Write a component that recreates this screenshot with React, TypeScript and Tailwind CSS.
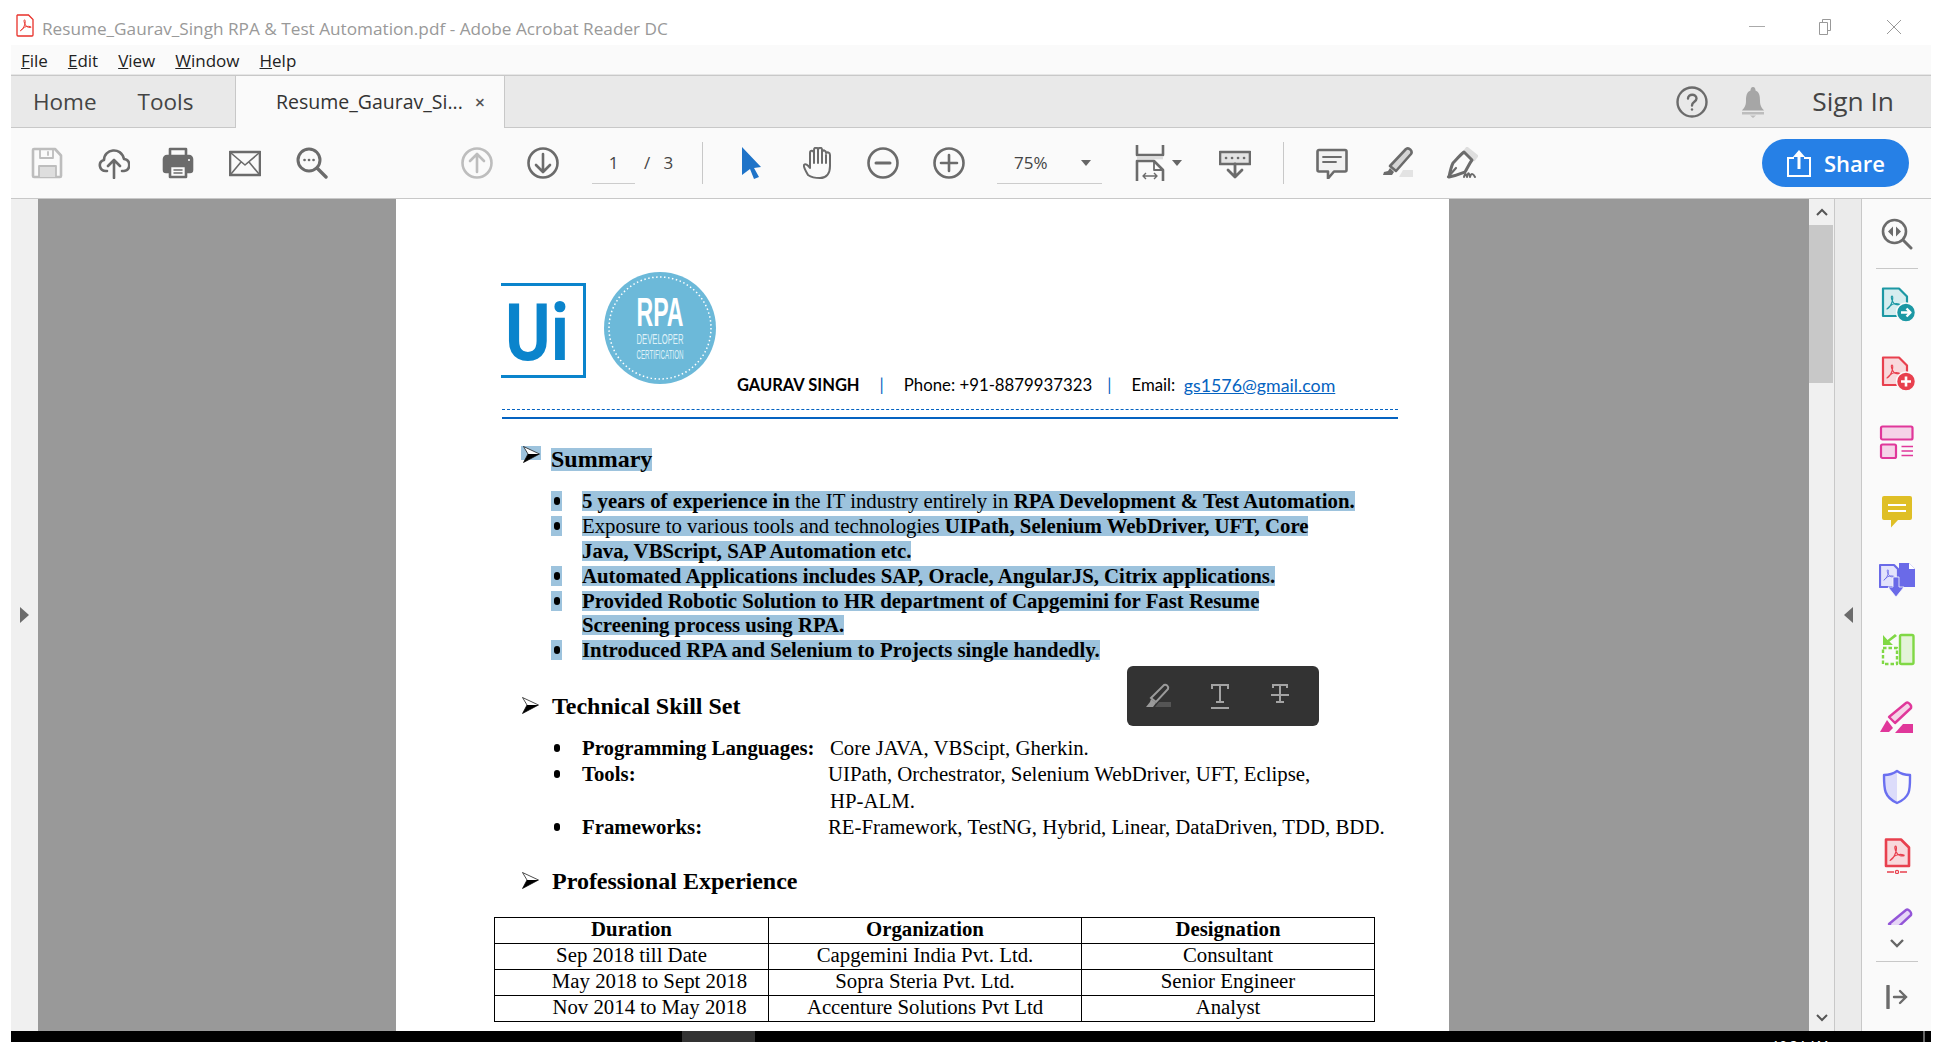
import type { ReactNode } from 'react';

const GRAY = '#6b6b6b';

const PdfMark = ({ color, x = 0, y = 0, s = 1 }: { color: string; x?: number; y?: number; s?: number }) => (
  <path
    transform={`translate(${x} ${y}) scale(${s})`}
    d="M1 14c2-1 4-4 5-7 1-3 1-6 0-6S5 4 7 7c1 2 3 3 6 3 1 0 1-1 0-1-3-1-7 0-9 2-1 1-3 3-3 3z"
    fill="none"
    stroke={color}
    strokeWidth="1.1"
  />
);

const Tb = ({ children, className }: { children: ReactNode; className: string }) => (
  <svg viewBox="0 0 32 32" className={`w-8 h-8 shrink-0 ${className}`} fill="none" stroke={GRAY} strokeWidth="2.6" strokeLinecap="round" strokeLinejoin="round">
    {children}
  </svg>
);

const Rail = ({ children }: { children: ReactNode }) => (
  <svg viewBox="0 0 36 36" className="w-9 h-9 shrink-0" fill="none" strokeWidth="2.2" strokeLinejoin="round">
    {children}
  </svg>
);

const RailCell = ({ children }: { children: ReactNode }) => (
  <div className="h-[69px] shrink-0 flex items-center justify-center">{children}</div>
);

const Arrow = () => (
  <svg viewBox="0 0 17 17" className="w-[17px] h-[17px] shrink-0">
    <path d="M0.5 0.5 16.5 8 0.5 16.5 5 8z" fill="#fff" stroke="#000" strokeWidth="0.7" />
    <path d="M0.5 16.5 16.5 8 5 8z" fill="#000" />
  </svg>
);

const Hl = ({ children, className = '' }: { children: ReactNode; className?: string }) => (
  <span className={`inline-block h-5 leading-5 bg-[#9dc3dd] ${className}`}>{children}</span>
);

const SummaryRow = ({ bullet = true, children }: { bullet?: boolean; children: ReactNode }) => (
  <div className="h-[24.8px] flex items-center pl-[49px] whitespace-nowrap">
    {bullet ? (
      <span className="w-[11px] h-5 bg-[#9dc3dd] flex items-center justify-center">
        <span className="w-[6px] h-2 rounded-full bg-black" />
      </span>
    ) : (
      <span className="w-[11px]" />
    )}
    <span className="w-5" />
    <Hl>{children}</Hl>
  </div>
);

const SkillRow = ({ label, value, indent = 'pl-0' }: { label?: string; value: string; indent?: string }) => (
  <div className="h-[26.3px] flex items-center pl-[49px] whitespace-nowrap">
    <span className="w-[11px] flex items-center justify-center">
      {label && <span className="w-[6px] h-2 rounded-full bg-black" />}
    </span>
    <span className="w-5" />
    <span className="w-[246px] font-bold">{label}</span>
    <span className={indent}>{value}</span>
  </div>
);

const rows = [
  ['Sep 2018 till Date', 'Capgemini India Pvt. Ltd.', 'Consultant'],
  ['May 2018 to Sept 2018', 'Sopra Steria Pvt. Ltd.', 'Senior Engineer'],
  ['Nov 2014 to May 2018', 'Accenture Solutions Pvt Ltd', 'Analyst'],
];

const App = () => {
  return (
    <div className="w-[1942px] h-[1042px] overflow-hidden bg-white flex flex-col px-[11px] font-['Open_Sans',sans-serif]">
      {/* Title bar */}
      <div className="h-[45px] shrink-0 flex items-center bg-white relative">
        <svg viewBox="0 0 18 23" className="w-[18px] h-[23px] ml-[5px] mt-[5px]">
          <path d="M1.5 1h11l4.5 4.5V21a1 1 0 0 1-1 1H2a1 1 0 0 1-1-1V1.5z" fill="#fff" stroke="#e8312a" strokeWidth="1.3" />
          <PdfMark color="#e8312a" x={3.5} y={5} s={0.85} />
        </svg>
        <span className="ml-[8px] mt-[12px] text-[17.2px] text-[#999] whitespace-nowrap">Resume_Gaurav_Singh RPA &amp; Test Automation.pdf - Adobe Acrobat Reader DC</span>
        <div className="ml-auto flex items-center mt-[8px]">
          <span className="w-4 h-px bg-[#aaa]" />
          <svg viewBox="0 0 16 16" className="w-4 h-4 ml-[52px]" fill="#fff" stroke="#999" strokeWidth="1">
            <path d="M5.5 3V.5h8v11H11" />
            <path d="M2.5 3.5h8v12h-8z" />
          </svg>
          <svg viewBox="0 0 16 16" className="w-4 h-4 ml-[53px] mr-[29px]" fill="none" stroke="#999" strokeWidth="1">
            <path d="M1 1l14 14M15 1 1 15" />
          </svg>
        </div>
      </div>

      {/* Menu bar */}
      <div className="h-[30px] shrink-0 bg-[#fafafa] border-b border-[#e6e6e6] flex items-center gap-5 pl-[10px] pt-[2px] text-[17px] text-[#222]">
        <span><u>F</u>ile</span>
        <span><u>E</u>dit</span>
        <span><u>V</u>iew</span>
        <span><u>W</u>indow</span>
        <span><u>H</u>elp</span>
      </div>

      {/* Tabs */}
      <div className="h-[53px] shrink-0 bg-[#e9e9e9] border-y border-[#c8c8c8] flex items-stretch text-[#444]">
        <div className="w-[224px] shrink-0 flex items-center pl-[22px] text-[22.5px]">
          <span>Home</span>
          <span className="ml-[41px]">Tools</span>
        </div>
        <div className="w-[270px] shrink-0 -mb-px bg-[#fafafa] border-x border-[#c8c8c8] flex items-center pl-[40px] text-[19.5px] text-[#333]">
          <span>Resume_Gaurav_Si...</span>
          <span className="ml-[12px] text-[18px] font-semibold text-[#555]">×</span>
        </div>
        <div className="ml-auto flex items-center">
          <svg viewBox="0 0 32 32" className="w-8 h-8" fill="none" stroke={GRAY} strokeWidth="2.4">
            <circle cx="16" cy="16" r="14.5" />
            <path d="M12 12.5c0-5 8.5-5 8.5 0 0 3.5-4.5 3-4.5 7" strokeLinecap="round" />
            <circle cx="16" cy="23.5" r="1.2" fill={GRAY} stroke="none" />
          </svg>
          <svg viewBox="0 0 28 32" className="w-7 h-8 ml-[31px]" fill="#a6a6a6">
            <path d="M14 1c2 0 2.5 2 2.5 3.5C20.5 6 21 10 21 15c0 5 2 7 4 9.500H3c2-2.500 4-4.500 4-9.500 0-5 .5-9 4.500-10.500C11.500 3 12 1 14 1z" />
            <path d="M3 26h22v2.500H3zM11 29.500h6l-3 2.500z" fill="#bdbdbd" />
          </svg>
          <span className="ml-[45px] mr-[37px] text-[26.3px] text-[#444]">Sign In</span>
        </div>
      </div>

      {/* Toolbar */}
      <div className="h-[71px] shrink-0 bg-[#fafafa] border-b border-[#c8c8c8] flex items-center">
        <Tb className="ml-5">
          <g stroke="#bdbdbd">
            <path d="M3 2h21l6 6.500V29a1 1 0 0 1-1 1H3a1 1 0 0 1-1-1V3a1 1 0 0 1 1-1z" />
            <path d="M9 2v9h13V2M17 5v3" strokeWidth="1.8" />
            <path d="M8 30V19h17v11" fill="#dedede" strokeWidth="1.8" />
          </g>
        </Tb>
        <Tb className="ml-[35px]">
          <path d="M9 24H8c-7 0-8.500-9-2-11 0-11 17-14 20-1 7 1 7 11 0 12h-2" />
          <path d="M16 31V14M10 19l6-6 6 6" />
        </Tb>
        <Tb className="ml-8">
          <path d="M8 9V2h16v7" />
          <path d="M7 25H4a2 2 0 0 1-2-2V12a3 3 0 0 1 3-3h22a3 3 0 0 1 3 3v11a2 2 0 0 1-2 2h-3" fill={GRAY} />
          <path d="M8 19h16v11H8z" fill="#fafafa" />
          <path d="M12 23h8M12 26h8" strokeWidth="1.5" />
          <circle cx="27" cy="13" r="1" fill="#fff" stroke="none" />
        </Tb>
        <Tb className="ml-[35px]">
          <path d="M1 5h30v23H1z" />
          <path d="M2 6l14 12L30 6M2 27l10-12M30 27 20 15" strokeWidth="1.6" />
        </Tb>
        <Tb className="ml-[35px]">
          <circle cx="13" cy="13" r="11" strokeWidth="3" />
          <path d="M21 21l9 9" strokeWidth="3.4" />
          <path d="M8.500 13h.1M13 13h.1M17.500 13h.1" />
        </Tb>

        <Tb className="ml-[133px]">
          <g stroke="#bdbdbd">
            <circle cx="16" cy="16" r="14.500" />
            <path d="M16 25V8M9 14l7-7 7 7" />
          </g>
        </Tb>
        <Tb className="ml-[34px]">
          <circle cx="16" cy="16" r="14.500" />
          <path d="M16 7v17M9 18l7 7 7-7" />
        </Tb>
        <div className="ml-[33px] w-[43px] h-[42px] border-b border-[#ccc] flex items-center justify-center text-[17px] text-[#444]">1</div>
        <div className="ml-[9px] w-[30px] text-[17px] text-[#444] whitespace-nowrap">/&nbsp;&nbsp;&nbsp;3</div>
        <div className="ml-[28px] w-px h-[42px] bg-[#c8c8c8]" />
        <svg viewBox="0 0 32 32" className="w-8 h-8 ml-[32px] shrink-0">
          <path d="M7 0 26 20l-7 1 5 9-5 2-4-10-8 6z" fill="#1e73c8" />
        </svg>
        <Tb className="ml-[36px]">
          <path d="M5 28C3 24 0 20 1 18c1-2 4 0 6 3V6c0-3 3.500-3 4 0V3c0-3 4-3 4 0v0c.5-3 4-3 4 0v2c1-2.500 4-2 4 1 1-1 4-1 4 2v11c0 8-4 12-10 12-6 0-9-1-12-3z" strokeWidth="2" />
          <path d="M11 6v10M15 3v13M19 5v11M23 8v8" strokeWidth="2" />
        </Tb>
        <Tb className="ml-8">
          <circle cx="16" cy="16" r="14.500" />
          <path d="M9 16h14" strokeWidth="3" />
        </Tb>
        <Tb className="ml-[34px]">
          <circle cx="16" cy="16" r="14.500" />
          <path d="M8 16h16M16 8v16" />
        </Tb>
        <div className="ml-8 w-[105px] h-[42px] shrink-0 border-b border-[#ccc] flex items-center pl-[17px] text-[17px] text-[#444]">
          <span>75%</span>
          <span className="ml-[33px] w-0 h-0 border-x-[5px] border-x-transparent border-t-[6px] border-t-[#666]" />
        </div>
        <svg viewBox="0 0 32 36" className="w-8 h-9 ml-8 shrink-0" fill="none" stroke={GRAY} strokeWidth="2.6" strokeLinejoin="round">
          <path d="M3 0v10h26V0" />
          <path d="M3 13h26" stroke="#ddd" />
          <path d="M3 36V16h17l9 9v11" />
          <path d="M20 16v9h9" strokeWidth="1.8" />
          <path d="M9 31h14M12 28l-3 3 3 3M20 28l3 3-3 3" strokeWidth="1.4" />
        </svg>
        <span className="ml-[6px] w-0 h-0 border-x-[5px] border-x-transparent border-t-[6px] border-t-[#666]" />
        <Tb className="ml-[37px]">
          <path d="M1 5h30v12H1z" fill="#e3e3e3" />
          <path d="M7 11h.1M13 11h.1M19 11h.1M25 11h.1" />
          <path d="M16 17v13M9 23l7 7 7-7" strokeWidth="2.800" />
        </Tb>
        <div className="ml-8 w-px h-[42px] bg-[#c8c8c8]" />
        <Tb className="ml-8">
          <path d="M3 3h26a1.500 1.500 0 0 1 1.500 1.500V23a1.500 1.500 0 0 1-1.500 1.500H18l-6 7v-7H3A1.500 1.500 0 0 1 1.500 23V4.500A1.500 1.500 0 0 1 3 3z" fill="#f1f1f1" />
          <path d="M7 10h18M7 15h13" strokeWidth="1.800" />
        </Tb>
        <Tb className="ml-[33px]">
          <path d="M18 30h15v-7H22z" fill="#e3e3e3" stroke="none" />
          <path d="M25 2c3-2 7 2 5 5L15 24l-6-5z" fill="#d5d5d5" />
          <path d="M9 21l-2 3-4 1-1 3h9l2-3z" fill={GRAY} stroke="none" />
        </Tb>
        <Tb className="ml-[33px]">
          <path d="M21 1l10 8-3 4-10-8z" fill="#dedede" stroke="#dedede" />
          <path d="M18 5l8 8c-3 4-5 9-7 12-3 1-6 3-16 5 1-5 2-10 4-14 3-3 7-8 11-11z" strokeWidth="3" />
          <path d="M2 30l8-9" strokeWidth="2.200" />
          <path d="M18 30c1-4 2-4 3 0 1-5 2-5 3 0 1-4 3-4 5 0" strokeWidth="2" />
        </Tb>
        <div className="ml-auto mr-[22px] w-[147px] h-12 rounded-full bg-[#2680e6] flex items-center pl-[24px] text-white text-[22px] font-semibold">
          <svg viewBox="0 0 26 28" className="w-[26px] h-[28px] mr-[12px]" fill="none" stroke="#fff" strokeWidth="2">
            <path d="M8 9H2v18h22V9h-6" />
            <path d="M13 20V3" strokeWidth="3" />
            <path d="M7 8l6-7 6 7z" fill="#fff" stroke="none" />
          </svg>
          <span>Share</span>
        </div>
      </div>

      {/* Document area */}
      <div className="flex-1 min-h-0 flex items-stretch">
        <div className="w-[27px] shrink-0 bg-[#f0f0f0] flex items-center justify-center">
          <span className="w-0 h-0 border-y-[8px] border-y-transparent border-l-[9px] border-l-[#6b6b6b]" />
        </div>
        <div className="flex-1 min-w-0 bg-[#999999] flex justify-center overflow-hidden relative">
          <div className="w-[1053px] -translate-x-px h-full bg-white pt-[73px] overflow-hidden font-['Liberation_Serif',serif] text-[20.8px] text-black relative">
            {/* Resume header */}
            <div className="h-[125px] pl-[105px] flex items-start">
              <svg viewBox="0 0 85 95" className="w-[85px] h-[95px] mt-[11px] shrink-0 overflow-visible">
                <path d="M0 1.500h83.500v92H0" fill="none" stroke="#0a84cc" strokeWidth="3" />
                <text x="4" y="77" fontFamily="Roboto, sans-serif" fontWeight="700" fontSize="80" fill="#0a84cc" textLength="64" lengthAdjust="spacingAndGlyphs">Ui</text>
              </svg>
              <svg viewBox="0 0 112 112" className="w-28 h-28 ml-[18px] shrink-0 overflow-visible">
                <circle cx="56" cy="56" r="56" fill="#6cb9d9" />
                <circle cx="56" cy="56" r="51" fill="none" stroke="#fff" strokeWidth="1.500" strokeDasharray="1.500 2.500" />
                <text x="56" y="54" textAnchor="middle" fontFamily="Liberation Sans, sans-serif" fontWeight="700" fontSize="40" fill="#fff" textLength="47" lengthAdjust="spacingAndGlyphs">RPA</text>
                <text x="56" y="72" textAnchor="middle" fontFamily="Liberation Sans, sans-serif" fontSize="14" fill="#dff1f8" textLength="47" lengthAdjust="spacingAndGlyphs">DEVELOPER</text>
                <text x="56" y="87" textAnchor="middle" fontFamily="Liberation Sans, sans-serif" fontSize="12" fill="#dff1f8" textLength="47" lengthAdjust="spacingAndGlyphs">CERTIFICATION</text>
              </svg>
              <div className="ml-[21px] mt-[102px] flex items-center h-[22px] whitespace-nowrap font-['Lato',sans-serif] text-[16.8px] text-black">
                <b className="text-[16.5px]">GAURAV SINGH</b>
                <span className="ml-[20px] text-[#0563c1]">|</span>
                <span className="ml-[20px]">Phone: +91-8879937323</span>
                <span className="ml-[15px] text-[#0563c1]">|</span>
                <span className="ml-[20px]">Email:&nbsp;&nbsp;</span>
                <span className="text-[17.8px] text-[#0563c1] underline">gs1576@gmail.com</span>
              </div>
            </div>
            <div className="ml-[106px] w-[896px] mt-3 border-t border-dashed border-[#0563c1]" />
            <div className="ml-[106px] w-[896px] mt-[7px] h-[2px] bg-[#0563c1]" />

            {/* Summary */}
            <div className="mt-[27px] h-[26px] pl-[125px] flex items-start text-[24px] font-bold">
              <span className="w-5 h-[14px] bg-[#9dc3dd] flex items-start justify-center"><Arrow /></span>
              <span className="ml-[10px] h-[23px] mt-[2px] leading-[23px] bg-[#9dc3dd]">Summary</span>
            </div>
            <div className="mt-[17px] pl-[106px]">
              <SummaryRow><b>5 years of experience in</b> the IT industry entirely in <b>RPA Development &amp; Test Automation.</b></SummaryRow>
              <SummaryRow>Exposure to various tools and technologies <b>UIPath, Selenium WebDriver, UFT, Core</b></SummaryRow>
              <SummaryRow bullet={false}><b>Java, VBScript, SAP Automation etc.</b></SummaryRow>
              <SummaryRow><b>Automated Applications includes SAP, Oracle, AngularJS, Citrix applications.</b></SummaryRow>
              <SummaryRow><b>Provided Robotic Solution to HR department of Capgemini for Fast Resume</b></SummaryRow>
              <SummaryRow bullet={false}><b>Screening process using RPA.</b></SummaryRow>
              <SummaryRow><b>Introduced RPA and Selenium to Projects single handedly.</b></SummaryRow>
            </div>

            {/* Skills */}
            <div className="mt-[30px] h-[26px] pl-[126px] flex items-center text-[24px] font-bold">
              <Arrow />
              <span className="ml-[13px]">Technical Skill Set</span>
            </div>
            <div className="mt-4 pl-[106px]">
              <SkillRow label="Programming Languages:" value="Core JAVA, VBScipt, Gherkin." indent="pl-[2px]" />
              <SkillRow label="Tools:" value="UIPath, Orchestrator, Selenium WebDriver, UFT, Eclipse," />
              <SkillRow value="HP-ALM." indent="pl-[2px]" />
              <SkillRow label="Frameworks:" value="RE-Framework, TestNG, Hybrid, Linear, DataDriven, TDD, BDD." />
            </div>

            {/* Experience */}
            <div className="mt-7 h-[26px] pl-[126px] flex items-center text-[24px] font-bold">
              <Arrow />
              <span className="ml-[13px]">Professional Experience</span>
            </div>
            <table className="mt-[23px] ml-[98px] w-[880px] table-fixed border-collapse text-[20.8px] leading-none">
              <colgroup>
                <col className="w-[274px]" />
                <col className="w-[313px]" />
                <col className="w-[293px]" />
              </colgroup>
              <tbody>
                <tr className="h-[26px] font-bold">
                  <td className="border border-black text-center p-0 pb-[2px]">Duration</td>
                  <td className="border border-black text-center p-0 pb-[2px]">Organization</td>
                  <td className="border border-black text-center p-0 pb-[2px]">Designation</td>
                </tr>
                {rows.map((row) => (
                  <tr key={row[0]} className="h-[26px]">
                    <td className={`border border-black text-center p-0 pb-[2px] ${row[0].startsWith('Sep') ? '' : 'pl-[36px]'}`}>{row[0]}</td>
                    <td className="border border-black text-center p-0 pb-[2px]">{row[1]}</td>
                    <td className="border border-black text-center p-0 pb-[2px]">{row[2]}</td>
                  </tr>
                ))}
              </tbody>
            </table>
          </div>

          {/* Text selection popup */}
          <div className="absolute left-[1089px] top-[467px] w-[192px] h-[60px] rounded-[6px] bg-[#333333] flex items-center pl-[18px]">
            <svg viewBox="0 0 26 26" className="w-[26px] h-[26px]" fill="none" stroke="#9a9a9a" strokeWidth="2">
              <path d="M10 24h16v-5H14z" fill="#555" stroke="none" />
              <path d="M19 2c2-1 5 1 4 4L11 19l-5-4z" />
              <path d="M6 16l-1 3-4 5h7l3-4z" fill="#9a9a9a" stroke="none" />
            </svg>
            <svg viewBox="0 0 22 26" className="w-[22px] h-[26px] ml-[39px]" fill="none" stroke="#a3a3a3" strokeWidth="2">
              <path d="M2 6V2h16v4M10 2v17M6 19h8M1 25h18" />
            </svg>
            <svg viewBox="0 0 22 22" className="w-[22px] h-[22px] ml-[38px] -mt-1" fill="none" stroke="#a3a3a3" strokeWidth="2">
              <path d="M3 5V2h14v3M10 2v17M6 19h8M1 12h18" />
            </svg>
          </div>
        </div>

        {/* Scrollbar */}
        <div className="w-[26px] shrink-0 bg-[#f0f0f0] border-r border-[#c8c8c8] flex flex-col items-center justify-between">
          <div className="w-full">
            <div className="h-[26px] flex items-center justify-center">
              <svg viewBox="0 0 12 8" className="w-3 h-2" fill="none" stroke="#555" strokeWidth="2"><path d="M1 7l5-5 5 5" /></svg>
            </div>
            <div className="w-[24px] h-[158px] bg-[#c8c8c8]" />
          </div>
          <div className="h-[26px] flex items-center justify-center">
            <svg viewBox="0 0 12 8" className="w-3 h-2" fill="none" stroke="#555" strokeWidth="2"><path d="M1 1l5 5 5-5" /></svg>
          </div>
        </div>
        <div className="w-[27px] shrink-0 bg-[#ebebeb] border-r border-[#c8c8c8] flex items-center justify-center">
          <span className="w-0 h-0 border-y-[8px] border-y-transparent border-r-[9px] border-r-[#6b6b6b]" />
        </div>

        {/* Right tools rail */}
        <div className="w-[69px] shrink-0 bg-[#fafafa] flex flex-col items-center">
          <div className="h-[69px] w-full shrink-0 flex items-center justify-center">
            <svg viewBox="0 0 32 32" className="w-8 h-8" fill="none" stroke={GRAY} strokeWidth="2.600">
              <circle cx="13.500" cy="13.500" r="11.500" />
              <path d="M22 22l8 8" strokeWidth="3" strokeLinecap="round" />
              <path d="M12 8.500v10l-5-5zM15 8.500v10l5-5z" fill={GRAY} stroke="none" />
            </svg>
          </div>
          <div className="w-[42px] h-px bg-[#c8c8c8] shrink-0" />
          <div className="h-[656px] w-full shrink-0 overflow-hidden">
            <RailCell>
              <Rail>
                <path d="M4 2.500h16l8 8V30H4z" fill="#d6edef" stroke="#1c98a4" />
                <PdfMark color="#1c98a4" x={7} y={9} s={1} />
                <circle cx="27" cy="26.500" r="9.500" fill="#1c98a4" stroke="#fafafa" strokeWidth="1.500" />
                <path d="M22 26.500h9M27.500 22.500l4 4-4 4" stroke="#fff" strokeWidth="2.400" />
              </Rail>
            </RailCell>
            <RailCell>
              <Rail>
                <path d="M4 2.500h16l8 8V30H4z" fill="#f8d9dc" stroke="#e8404e" />
                <PdfMark color="#e8404e" x={7} y={9} s={1} />
                <circle cx="27" cy="26.500" r="9.500" fill="#e8404e" stroke="#fafafa" strokeWidth="1.500" />
                <path d="M22 26.500h10M27 21.500v10" stroke="#fff" strokeWidth="2.600" />
              </Rail>
            </RailCell>
            <RailCell>
              <Rail>
                <rect x="2" y="2.500" width="31.500" height="13" rx="1.500" fill="#f5d3e8" stroke="#e0379a" />
                <rect x="2" y="20.500" width="15" height="13.500" rx="1.500" fill="#f5d3e8" stroke="#e0379a" />
                <path d="M22.500 22.500H34M22.500 27H34M22.500 31.500H34" stroke="#e0379a" strokeWidth="1.400" />
              </Rail>
            </RailCell>
            <RailCell>
              <Rail>
                <path d="M5 3h26a2 2 0 0 1 2 2v20a2 2 0 0 1-2 2H19l-7 7.500V27H5a2 2 0 0 1-2-2V5a2 2 0 0 1 2-2z" fill="#dfbf26" />
                <path d="M9 12h18M9 18h18" stroke="#fff" strokeWidth="2" />
              </Rail>
            </RailCell>
            <RailCell>
              <Rail>
                <path d="M20 1h10l6 6v18H20z" fill="#6a6ae8" />
                <path d="M30 1v6h6z" fill="#fff" />
                <path d="M1 3h14l4 4v18H1z" fill="#e3e3fb" stroke="#6a6ae8" />
                <PdfMark color="#6a6ae8" x={4} y={7} s={0.8} />
                <path d="M14 15h6v10h5l-8 10-8-10h5z" fill="#6a6ae8" stroke="#fafafa" strokeWidth="0.800" />
              </Rail>
            </RailCell>
            <RailCell>
              <Rail>
                <rect x="21" y="4" width="13.500" height="29" rx="1.500" fill="#e4f3d8" stroke="#80d845" strokeWidth="2.400" />
                <path d="M4 17h14v16H4z" stroke="#80d845" strokeWidth="2.400" strokeDasharray="3.500 2" />
                <path d="M4 4v10h10l-3.500-3.500L18 5l-2-2-7.500 6z" fill="#80d845" />
              </Rail>
            </RailCell>
            <RailCell>
              <Rail>
                <path d="M16 33h18v-9H24z" fill="#e0379a" />
                <path d="M27 3c2-1.500 6 2 5 5L16 23l-6-6z" fill="#f5d3e8" stroke="#e0379a" strokeWidth="2.400" />
                <path d="M8 20l-7 12h9l4-4z" fill="#e0379a" />
              </Rail>
            </RailCell>
            <RailCell>
              <Rail>
                <path d="M18 2C14 5 9 6 5 6c0 14 0 22 13 28z" fill="#dcdcfa" />
                <path d="M18 2c4 3 9 4 13 4 0 14 1 22-13 28C5 28 5 20 5 6c4 0 9-1 13-4z" stroke="#6a6ff0" strokeWidth="2.400" />
              </Rail>
            </RailCell>
            <RailCell>
              <Rail>
                <path d="M7 1.500h15l8 8V28H7z" fill="#f8d9dc" stroke="#e8404e" strokeWidth="2.600" />
                <PdfMark color="#e8404e" x={10} y={7} s={1.100} />
                <path d="M8 34h7M21 34h7" stroke="#e8404e" strokeWidth="1.400" />
                <circle cx="18" cy="34" r="1.600" stroke="#e8404e" strokeWidth="1.200" />
              </Rail>
            </RailCell>
            <RailCell>
              <Rail>
                <path d="M27 3c2-1.500 6 2 5 5L16 23l-6-6z" fill="#e6d6f6" stroke="#9355d8" strokeWidth="2.400" />
              </Rail>
            </RailCell>
          </div>
          <div className="h-9 shrink-0 flex items-center justify-center">
            <svg viewBox="0 0 14 9" className="w-[14px] h-[9px]" fill="none" stroke="#666" strokeWidth="2.400"><path d="M1 1l6 6 6-6" /></svg>
          </div>
          <div className="w-[42px] h-px bg-[#c8c8c8] shrink-0" />
          <div className="flex-1 flex items-center justify-center">
            <svg viewBox="0 0 22 24" className="w-[22px] h-6" fill="none" stroke={GRAY} strokeWidth="2.400" strokeLinecap="round">
              <path d="M2 1v22" strokeWidth="3.400" />
              <path d="M8 12h12M14 6l6 6-6 6" />
            </svg>
          </div>
        </div>
      </div>

      {/* Desktop taskbar, clipped by the bottom of the capture */}
      <div className="h-[11px] shrink-0 bg-black flex overflow-hidden">
        <div className="ml-[671px] w-[73px] h-full bg-[#333333]" />
        <span className="ml-[1017px] mt-[6px] text-[13px] leading-4 text-white font-['Open_Sans',sans-serif]">10:34 AM</span>
        <div className="ml-auto mr-[6px] w-[2px] h-full bg-[#666]" />
      </div>
    </div>
  );
};

export default App;
